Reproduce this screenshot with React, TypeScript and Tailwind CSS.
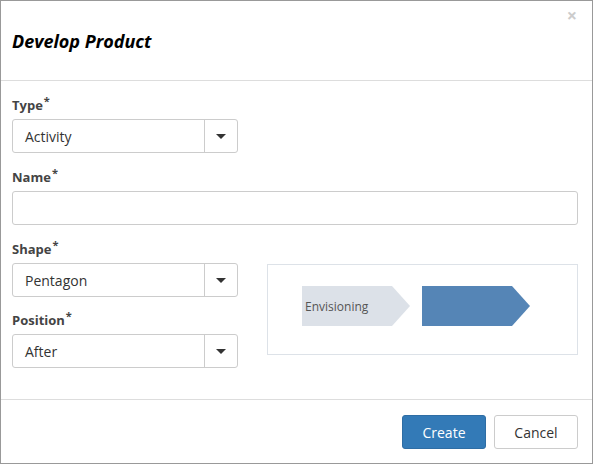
const FONT = { fontFamily: '"Open Sans", "Liberation Sans", sans-serif' }

function Caret() {
  return (
    <svg width="10" height="5" viewBox="0 0 10 5" className="block">
      <path d="M0 0h10L5 5z" fill="#333" />
    </svg>
  )
}

function Label({ children }: { children: string }) {
  return (
    <div className="mb-[5px] flex h-[18px] items-start text-[13px] font-bold leading-[18px] text-[#444]">
      {children}
      <span className="ml-px -mt-[4px] text-[11px] leading-[18px]">*</span>
    </div>
  )
}

function Select({ value }: { value: string }) {
  return (
    <div className="flex h-[34px] w-[226px] rounded-[3px] border border-[#ccc] bg-white">
      <div className="flex flex-1 items-center pl-[12px] text-[14px] text-[#333]">{value}</div>
      <div className="flex w-[33px] items-center justify-center border-l border-[#ccc]">
        <Caret />
      </div>
    </div>
  )
}

function Pentagon({ fill, label }: { fill: string; label?: string }) {
  return (
    <div className="relative h-[40px] w-[108px]">
      <svg width="108" height="40" viewBox="0 0 108 40" className="absolute inset-0">
        <path d="M0 0H90L108 20L90 40H0Z" fill={fill} />
      </svg>
      {label && (
        <span className="absolute left-[3px] top-[12px] text-[12px] leading-[18px] text-[#555]">{label}</span>
      )}
    </div>
  )
}

export default function App() {
  return (
    <div style={FONT} className="h-[464px] w-[593px] border border-[#999] bg-white">
      <div className="relative flex h-[80px] items-center border-b border-[#ddd] pl-[11px] pt-[2px]">
        <h4 className="text-[18px] font-bold italic text-black">Develop Product</h4>
        <span className="absolute right-[15px] top-[5px] text-[18px] font-bold leading-[18px] text-[#ccc]">×</span>
      </div>

      <div className="h-[319px] border-b border-[#ddd] pb-[29px] pl-[11px] pr-[14px] pt-[15px]">
        <Label>Type</Label>
        <Select value="Activity" />

        <div className="mt-[15px]">
          <Label>Name</Label>
          <div className="h-[34px] w-full rounded-[3px] border border-[#ccc]" />
        </div>

        <div className="mt-[15px] flex">
          <div className="w-[226px]">
            <Label>Shape</Label>
            <Select value="Pentagon" />
            <div className="mt-[14px]">
              <Label>Position</Label>
              <Select value="After" />
            </div>
          </div>
          <div className="ml-[29px] mt-[24px] flex h-[91px] flex-1 items-start border border-[#dde2e8] pl-[34px] pt-[21px]">
            <Pentagon fill="#dce1e8" label="Envisioning" />
            <div className="ml-[12px]">
              <Pentagon fill="#5585b6" />
            </div>
          </div>
        </div>
      </div>

      <div className="flex justify-end gap-[8px] pr-[14px] pt-[15px]">
        <button className="h-[34px] w-[84px] rounded-[3px] border border-[#2e6da4] bg-[#337ab7] text-[14px] text-white">
          Create
        </button>
        <button className="h-[34px] w-[84px] rounded-[3px] border border-[#ccc] bg-white text-[14px] text-[#333]">
          Cancel
        </button>
      </div>
    </div>
  )
}
